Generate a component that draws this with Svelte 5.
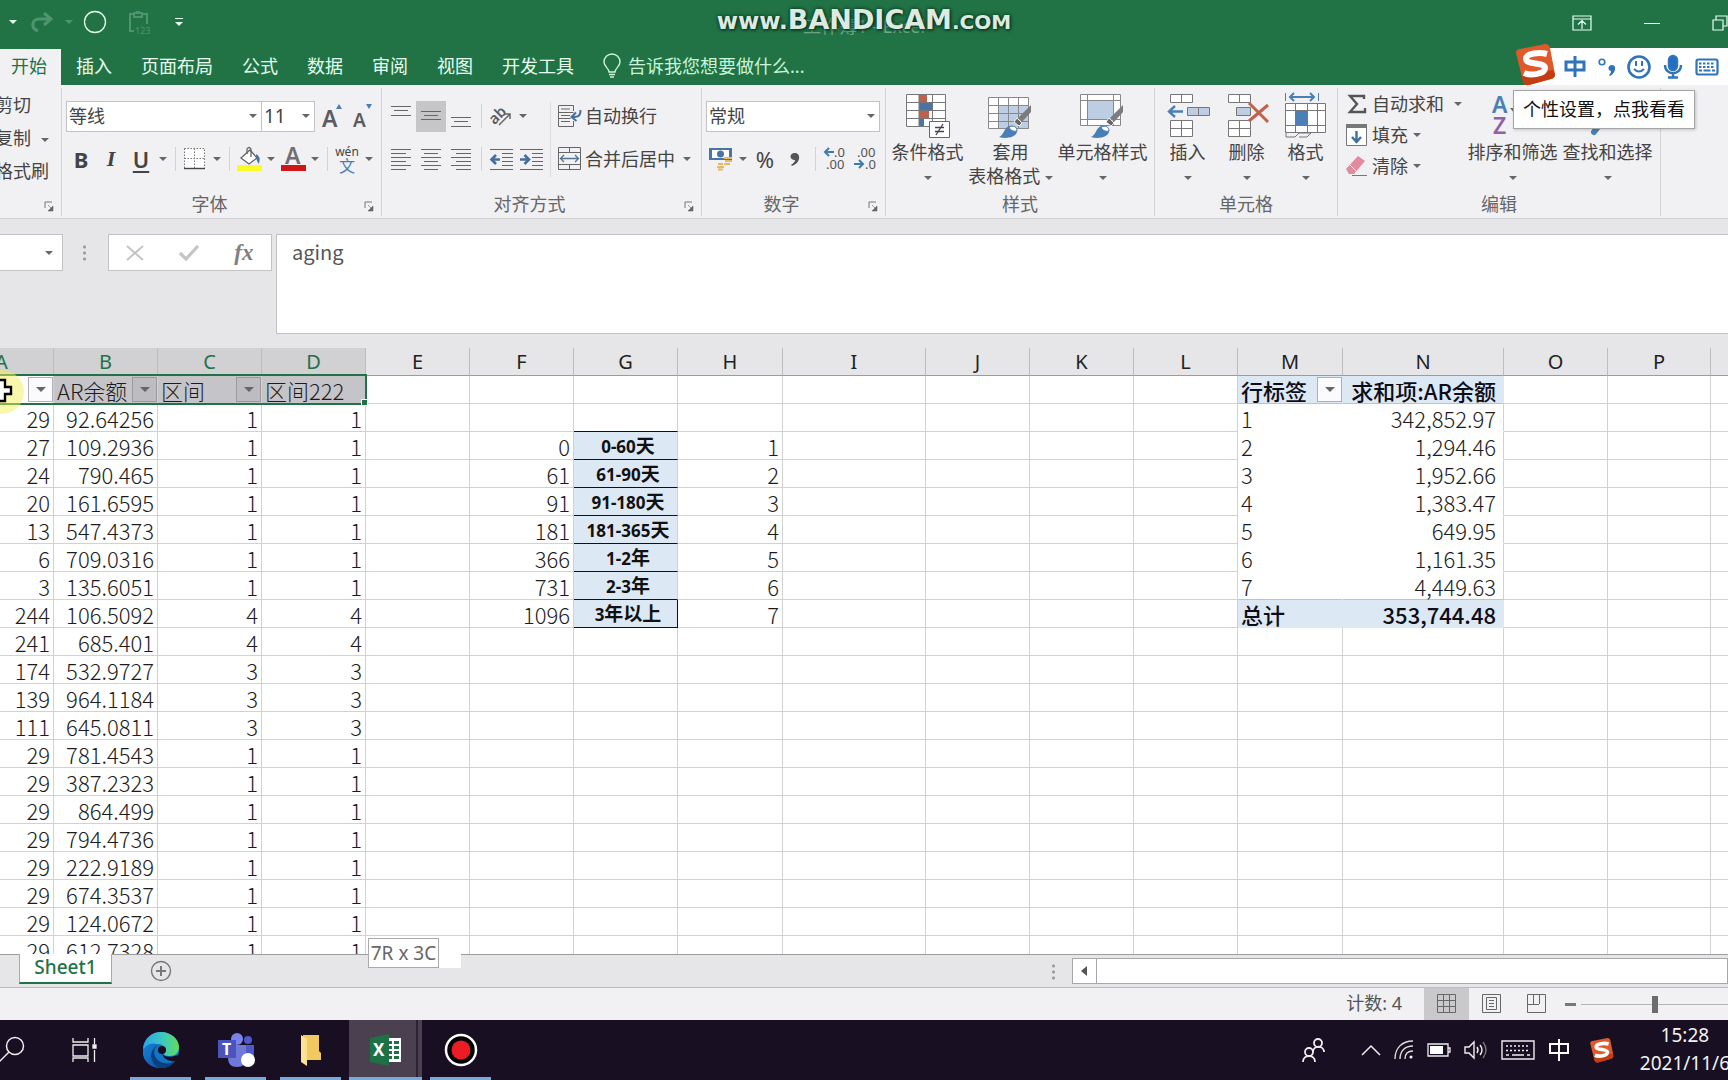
<script>
  const tabs = ["开始", "插入", "页面布局", "公式", "数据", "审阅", "视图", "开发工具"];

  const columns = [
    { name: "A", width: 104 },
    { name: "B", width: 104 },
    { name: "C", width: 104 },
    { name: "D", width: 104 },
    { name: "E", width: 104 },
    { name: "F", width: 104 },
    { name: "G", width: 104 },
    { name: "H", width: 105 },
    { name: "I", width: 143 },
    { name: "J", width: 104 },
    { name: "K", width: 104 },
    { name: "L", width: 104 },
    { name: "M", width: 105 },
    { name: "N", width: 161 },
    { name: "O", width: 104 },
    { name: "P", width: 103 },
    { name: "Q", width: 0 }
  ];

  const aging = [
    ["29", "92.64256", "1", "1"],
    ["27", "109.2936", "1", "1"],
    ["24", "790.465", "1", "1"],
    ["20", "161.6595", "1", "1"],
    ["13", "547.4373", "1", "1"],
    ["6", "709.0316", "1", "1"],
    ["3", "135.6051", "1", "1"],
    ["244", "106.5092", "4", "4"],
    ["241", "685.401", "4", "4"],
    ["174", "532.9727", "3", "3"],
    ["139", "964.1184", "3", "3"],
    ["111", "645.0811", "3", "3"],
    ["29", "781.4543", "1", "1"],
    ["29", "387.2323", "1", "1"],
    ["29", "864.499", "1", "1"],
    ["29", "794.4736", "1", "1"],
    ["29", "222.9189", "1", "1"],
    ["29", "674.3537", "1", "1"],
    ["29", "124.0672", "1", "1"],
    ["29", "612.7328", "1", "1"]
  ];

  const buckets = [
    ["0", "0-60", "天", "1"],
    ["61", "61-90", "天", "2"],
    ["91", "91-180", "天", "3"],
    ["181", "181-365", "天", "4"],
    ["366", "1-2", "年", "5"],
    ["731", "2-3", "年", "6"],
    ["1096", "3", "年以上", "7"]
  ];

  const pivot = ["342,852.97", "1,294.46", "1,952.66", "1,383.47", "649.95", "1,161.35", "4,449.63"];

  // row numbers as in the sheet, row 1 is the header row
  function buildRow(n) {
    const row = {};
    const data = aging[n - 2];
    if (data) {
      ["A", "B", "C", "D"].forEach((c, i) => (row[c] = { text: data[i], cls: "num" }));
    } else {
      row.A = { text: "", cls: "head", filter: true };
      row.B = { text: "AR余额", cls: "head picked", filter: true };
      row.C = { text: "区间", cls: "head picked", filter: true };
      row.D = { text: "区间222", cls: "head picked" };
    }
    const b = buckets[n - 3];
    if (b) {
      row.F = { text: b[0], cls: "num" };
      row.G = { text: b[1], cjk: b[2], cls: n === 9 ? "bucket last" : "bucket" };
      row.H = { text: b[3], cls: "num wide" };
    }
    if (n === 2) row.G = { text: "", cls: "above" };
    if (n === 1) {
      row.M = { text: "行标签", cls: "pivot-head", filter: true };
      row.N = { text: "求和项:AR余额", cls: "pivot-head right" };
    } else if (n <= 8) {
      row.M = { text: String(n - 1), cls: "pivot first" };
      row.N = { text: pivot[n - 2], cls: "pivot right" };
      if (n === 8) {
        row.M.cls += " end";
        row.N.cls += " end";
      }
    } else if (n === 9) {
      row.M = { text: "总计", cls: "pivot-head total" };
      row.N = { text: "353,744.48", cls: "pivot-head total right" };
    }
    return row;
  }

  const rows = Array.from({ length: 21 }, (_, i) => buildRow(i + 1));

  let formula = $state("aging");
  let zoom = $state(50);
  let activeTab = $state("开始");
</script>

{#snippet caret()}<span class="caret"></span>{/snippet}

{#snippet launcher(label)}
  <button class="launcher" aria-label={label}>
    <svg width="10" height="11" viewBox="0 0 10 11"><path d="M1 7V1h7" fill="none" stroke="#777" /><path d="M4 4l4 4M9 5v5H4z" fill="#666" stroke="#666" stroke-width=".6" /></svg>
  </button>
{/snippet}

{#snippet lines(list)}
  <svg width="20" height="24" viewBox="0 0 20 24" stroke="#666" stroke-width="1">
    {#each list as [x, w, y]}
      <path d="M{x} {y}.5h{w}" />
    {/each}
  </svg>
{/snippet}

{#snippet brush()}
  <path d="M43 12L30 25l4 4 9-10z" fill="#7c7c80" />
  <path d="M29 25l5 5-3 3-5-4z" fill="#666" stroke="#f1f0f3" stroke-width="1" />
  <path d="M11 44c5-2 5-9 10-11 5-1 9 2 8 6-2 6-12 7-18 5z" fill="#4a7fb5" />
  <path d="M21 34c1 3 4 5 8 4 0-4-3-6-8-4z" fill="#fff" stroke="#4a7fb5" />
{/snippet}

{#snippet sogou(size)}
  <svg width={size} height={size} viewBox="0 0 42 42">
    <path d="M2 9Q2 5 6 5L31 0q4 0 5 4l5 26q0 4-4 5L15 41q-5 1-6-4z" fill="#e0592a" />
    <path d="M9 37l-1-5 31-6 2 5q0 3-4 4L15 41q-5 1-6-4z" fill="#c33c12" />
    <path d="M33 10C26 8 12 9 12 15s19 3 19 9-14 8-21 5" fill="none" stroke="#fff" stroke-width="6" />
  </svg>
{/snippet}

<div class="window">
  <header class="titlebar">
    <div class="quick">
      {@render caret()}
      <button class="faded" aria-label="恢复">
        <svg width="22" height="22" viewBox="0 0 22 22" fill="none" stroke="#4f9470" stroke-width="3"><path d="M7 20C-1 17 1 8 8 8h11M13 2l7 6-7 6" /></svg>
      </button>
      <span class="caret faded"></span>
      <button class="oval" aria-label="椭圆">
        <svg width="24" height="24" viewBox="0 0 24 24"><circle cx="12" cy="12" r="10.5" fill="none" stroke="#e6fff0" stroke-width="1.3" /></svg>
      </button>
      <button class="paste" aria-label="粘贴值">
        <svg width="22" height="24" viewBox="0 0 22 24" fill="none" stroke="#4f9470" stroke-width="2"><path d="M5 21H1V4h4M14 4h4v10M5 3h8v4H5zM7 2h4" /><text x="6" y="24" font-size="9" fill="#4f9470" stroke="none" font-family="Noto Sans">123</text></svg>
      </button>
      <button aria-label="自定义快速访问工具栏">
        <svg width="8" height="9" viewBox="0 0 8 9"><path d="M0 .5h8" stroke="#e6fff0" /><path d="M0 4h8L4 8z" fill="#e6fff0" /></svg>
      </button>
    </div>
    <div class="doc-title">工作簿1 - Excel</div>
    <div class="controls">
      <button aria-label="功能区显示选项">
        <svg width="20" height="16" viewBox="0 0 20 16" fill="none" stroke="#e6fff0" stroke-width="1.2"><path d="M1 1h18v14H1zM1 4h18M10 14V6M6 9.500l4-4 4 4" /></svg>
      </button>
      <button aria-label="最小化">
        <svg width="16" height="16" viewBox="0 0 16 16"><path d="M0 8.500h16" stroke="#e6fff0" /></svg>
      </button>
      <button aria-label="还原">
        <svg width="16" height="16" viewBox="0 0 16 16" fill="none" stroke="#e6fff0" stroke-width="1.200"><path d="M1 5h10v10H1zM4 5V1h11v10h-4" /></svg>
      </button>
    </div>
    <div class="watermark"><small>www.</small>BANDICAM<small class="com">.COM</small></div>
  </header>

  <nav class="tabs">
    {#each tabs as tab}
      <button class="tab" class:active={activeTab === tab} onclick={() => (activeTab = tab)}>{tab}</button>
    {/each}
    <button class="tell-me">
      <svg width="18" height="24" viewBox="0 0 18 24" fill="none" stroke="#c9f5da" stroke-width="1.400"><path d="M6 18c0-4-5-5-5-10a8 8 0 0116 0c0 5-5 6-5 10zM6 20.500h6M7 23h4" /></svg>
      告诉我您想要做什么...
    </button>
  </nav>

  <section class="ribbon">
    <div class="group clipboard">
      <div class="body">
        <button>剪切</button>
        <button>复制 {@render caret()}</button>
        <button>格式刷</button>
      </div>
      <div class="foot"><span></span>{@render launcher("剪贴板")}</div>
    </div>

    <div class="group font">
      <div class="body rows">
        <div class="row">
          <label class="combo family">
            <select aria-label="字体"><option>等线</option></select>
            {@render caret()}
          </label>
          <label class="combo size">
            <select aria-label="字号"><option>11</option></select>
            {@render caret()}
          </label>
          <button class="tool" aria-label="增大字号">
            <svg width="22" height="26" viewBox="0 0 22 26"><text x="0" y="24" font-size="23" class="glyph">A</text><path d="M14 6l3-5 3 5z" fill="#4a7fb5" /></svg>
          </button>
          <button class="tool" aria-label="减小字号">
            <svg width="20" height="26" viewBox="0 0 20 26"><text x="0" y="24" font-size="19" class="glyph">A</text><path d="M13 1h6l-3 5z" fill="#4a7fb5" /></svg>
          </button>
        </div>
        <div class="row">
          <button class="tool letter"><b>B</b></button>
          <button class="tool letter italic"><i>I</i></button>
          <button class="tool letter"><u>U</u></button>
          <button class="drop" aria-label="下划线样式">{@render caret()}</button>
          <span class="sep"></span>
          <button class="tool" aria-label="边框">
            <svg width="22" height="22" viewBox="0 0 22 22" fill="none" stroke="#777"><path d="M.5.5h20v20H.5z" fill="#fff" stroke="none" /><path d="M.5.5h20v20M.5.5v20M10.500.5v20M.5 10.500h20" stroke-dasharray="1.500 1.500" /><path d="M0 20.500h21" stroke="#444" stroke-width="1.400" /></svg>
          </button>
          <button class="drop" aria-label="边框样式">{@render caret()}</button>
          <span class="sep"></span>
          <button class="tool" aria-label="填充颜色">
            <svg width="25" height="26" viewBox="0 0 25 26"><path d="M4 12l9-8 7 8-8 6z" fill="#fff" stroke="#666" stroke-width="1.300" /><path d="M10 8V3q2-3 4 0v8" fill="none" stroke="#666" stroke-width="1.300" /><path d="M19 8q5 2 3 10-3-3-3-10z" fill="#4a6f9d" /><path d="M0 19h25v6H0z" fill="#fbfb26" /></svg>
          </button>
          <button class="drop" aria-label="填充颜色列表">{@render caret()}</button>
          <button class="tool" aria-label="字体颜色">
            <svg width="25" height="26" viewBox="0 0 25 26"><text x="4" y="18" font-size="23" class="glyph light">A</text><path d="M0 19h25v6H0z" fill="#d01717" /></svg>
          </button>
          <button class="drop" aria-label="字体颜色列表">{@render caret()}</button>
          <span class="sep"></span>
          <button class="tool phonetic"><span>wén</span><span class="wen">文</span></button>
          <button class="drop" aria-label="拼音选项">{@render caret()}</button>
        </div>
      </div>
      <div class="foot"><span>字体</span>{@render launcher("字体设置")}</div>
    </div>

    <div class="group align">
      <div class="body split">
        <div class="rows">
          <div class="row">
            <button class="tool" aria-label="顶端对齐">{@render lines([[0, 20, 2], [3, 14, 6], [0, 20, 11]])}</button>
            <button class="tool on" aria-label="垂直居中">{@render lines([[0, 20, 7], [3, 14, 11], [0, 20, 15]])}</button>
            <button class="tool" aria-label="底端对齐">{@render lines([[0, 20, 13], [3, 14, 17], [0, 20, 22]])}</button>
            <span class="sep"></span>
            <button class="tool" aria-label="方向">
              <svg width="22" height="22" viewBox="0 0 22 22"><text x="-1" y="15" font-size="15" class="glyph" transform="rotate(-45 8 11)">ab</text><path d="M9 20L20 9M15 9h5v5" fill="none" stroke="#666" stroke-width="1.500" /></svg>
            </button>
            <button class="drop" aria-label="方向选项">{@render caret()}</button>
          </div>
          <div class="row">
            <button class="tool" aria-label="左对齐">{@render lines([[0, 20, 2], [0, 15, 6], [0, 20, 10], [0, 15, 14], [0, 20, 18], [0, 15, 22]])}</button>
            <button class="tool" aria-label="居中">{@render lines([[0, 20, 2], [3, 14, 6], [0, 20, 10], [3, 14, 14], [0, 20, 18], [3, 14, 22]])}</button>
            <button class="tool" aria-label="右对齐">{@render lines([[0, 20, 2], [5, 15, 6], [0, 20, 10], [5, 15, 14], [0, 20, 18], [5, 15, 22]])}</button>
            <span class="sep"></span>
            <button class="tool" aria-label="减少缩进量">
              <svg width="23" height="24" viewBox="0 0 23 24" stroke="#666"><path d="M0 2.500h23M12 6.500h11M12 10.500h11M12 14.500h11M12 18.500h11M0 22.500h23" /><path d="M10 12.500H3M6 8l-4.500 4.500L6 17" fill="none" stroke="#456f9f" stroke-width="2.600" /></svg>
            </button>
            <button class="tool" aria-label="增加缩进量">
              <svg width="23" height="24" viewBox="0 0 23 24" stroke="#666"><path d="M0 2.500h23M12 6.500h11M12 10.500h11M12 14.500h11M12 18.500h11M0 22.500h23" /><path d="M0 12.500h7M4.500 8L9 12.500 4.500 17" fill="none" stroke="#456f9f" stroke-width="2.600" /></svg>
            </button>
          </div>
        </div>
        <div class="rows wrap-col">
          <button class="row">
            <svg width="24" height="24" viewBox="0 0 24 24" fill="none" stroke="#666"><path d="M15.500 7V1.500H.5v21h15V17M.5 8.500h15M.5 14.500h12M3 5h9M3 11.500h9M3 17.500h9" /><path d="M22.500 6c0 6-2 7-8 7M18 8.500L13.500 13l5 4" stroke="#456f9f" stroke-width="2" /></svg>
            自动换行
          </button>
          <button class="row">
            <svg width="24" height="24" viewBox="0 0 24 24" fill="none" stroke="#666"><path d="M.5.5h22v22H.5zM.5 5.500h22M.5 17.500h22M11.500.5v5M11.500 17.500v5" /><path d="M3 11.500h17M6 8l-3.500 3.500L6 15M17 8l3.500 3.500L17 15" stroke="#55748f" stroke-width="1.300" /></svg>
            合并后居中
            {@render caret()}
          </button>
        </div>
      </div>
      <div class="foot"><span>对齐方式</span>{@render launcher("对齐设置")}</div>
    </div>

    <div class="group number">
      <div class="body rows">
        <div class="row">
          <label class="combo format">
            <select aria-label="数字格式"><option>常规</option></select>
            {@render caret()}
          </label>
        </div>
        <div class="row">
          <button class="tool" aria-label="会计数字格式">
            <svg width="24" height="22" viewBox="0 0 24 22"><path d="M0 0h23v12H0z" fill="#4a74a3" /><path d="M3 2h17v8H3z" fill="#fff" /><circle cx="11.500" cy="6" r="3.500" fill="#4a74a3" /><path d="M15 10h8M16 13h7M15 16h6M9 16h5M8 19h7M9 21.500h5" stroke="#e8b869" stroke-width="2" /></svg>
          </button>
          <button class="drop" aria-label="会计格式列表">{@render caret()}</button>
          <button class="tool percent">%</button>
          <button class="tool" aria-label="千位分隔样式">
            <svg width="10" height="15" viewBox="0 0 10 15"><path d="M5 1c6 0 6 10-3 13l-1-1c3-2 4-4 4-5C-1 8-1 1 5 1z" fill="#555" /></svg>
          </button>
          <span class="sep"></span>
          <button class="tool decimal" aria-label="增加小数位数">
            <svg width="24" height="26" viewBox="0 0 24 26"><path d="M11 6H3M6 2L2 6l4 4" fill="none" stroke="#3f7ab0" stroke-width="2" /><text x="11" y="11">.0</text><text x="3" y="23">.00</text></svg>
          </button>
          <button class="tool decimal" aria-label="减少小数位数">
            <svg width="24" height="26" viewBox="0 0 24 26"><text x="4" y="11">.00</text><path d="M1 18h8M6 14l4 4-4 4" fill="none" stroke="#3f7ab0" stroke-width="2" /><text x="12" y="23">.0</text></svg>
          </button>
        </div>
      </div>
      <div class="foot"><span>数字</span>{@render launcher("数字格式设置")}</div>
    </div>

    <div class="group styles">
      <div class="body bigs">
        <button class="big cond">
          <span class="pic">
            <svg width="46" height="46" viewBox="0 0 46 46"><path d="M1 1h40v32H1z" fill="#fff" /><path d="M14 1h8v8h-8zM14 18h10v7H14z" fill="#c0604c" /><path d="M14 10h13v7H14zM14 26h5v7h-5z" fill="#4a74a8" /><path d="M1.500 1.500h39v32h-39zM14 1v32M27.500 1v32M1 9.500h40M1 17.500h40M1 25.500h40" fill="none" stroke="#777" /><path d="M24.500 28.500h20v16h-20z" fill="#fff" stroke="#666" /><path d="M30 34.500h9M30 38.500h9M38 31l-7 11" stroke="#444" stroke-width="1.300" /></svg>
          </span>
          <span>条件格式</span>
          <span>{@render caret()}</span>
        </button>
        <button class="big table-style">
          <span class="pic">
            <svg width="46" height="46" viewBox="0 0 46 46"><path d="M.5 4.500h40v31H.5z" fill="#fff" /><path d="M11 13h30v23H11z" fill="#bdcde4" /><path d="M.5 4.500h40v31H.5zM10.500 4v31M20.500 4v31M30.500 4v31M0 12.500h40M0 20.500h40M0 28.500h40" fill="none" stroke="#888" />{@render brush()}</svg>
          </span>
          <span>套用</span>
          <span>表格格式 {@render caret()}</span>
        </button>
        <button class="big cell-style">
          <span class="pic">
            <svg width="46" height="46" viewBox="0 0 46 46"><path d="M.5 1.500h40v31H.5z" fill="#fff" /><path d="M8 8h26v18H8z" fill="#bdcde4" /><path d="M.5 1.500h40v31H.5zM7.500 1v31M33.500 1v31M0 7.500h40M0 26.500h40" fill="none" stroke="#888" />{@render brush()}</svg>
          </span>
          <span>单元格样式</span>
          <span>{@render caret()}</span>
        </button>
      </div>
      <div class="foot"><span>样式</span></div>
    </div>

    <div class="group cells">
      <div class="body bigs">
        <button class="big">
          <span class="pic">
            <svg width="44" height="46" viewBox="0 0 44 46"><path d="M4.500 1.500h22v8h-22zM4.500 27.500h22v16h-22zM15.500 1v8M15.500 27v16M4 35.500h22" fill="#fff" stroke="#777" /><path d="M21.500 14.500h22v8h-22zM32.500 14v8" fill="#bdcde4" stroke="#777" /><path d="M17 18.500H4M9 13l-6 5.500L9 24" fill="none" stroke="#4a80b5" stroke-width="2.400" /></svg>
          </span>
          <span>插入</span>
          <span>{@render caret()}</span>
        </button>
        <button class="big">
          <span class="pic">
            <svg width="44" height="46" viewBox="0 0 44 46"><path d="M3.500 1.500h22v8h-22zM3.500 27.500h22v16h-22zM14.500 1v8M14.500 27v16M3 35.500h22" fill="#fff" stroke="#777" /><path d="M11.500 14.500h14v8h-14z" fill="#bdcde4" stroke="#777" /><path d="M24 10l19 19M43 12L24 28" fill="none" stroke="#c4604a" stroke-width="3" /></svg>
          </span>
          <span>删除</span>
          <span>{@render caret()}</span>
        </button>
        <button class="big">
          <span class="pic">
            <svg width="44" height="46" viewBox="0 0 44 46"><path d="M1.500 0v8M34.500 0v8" stroke="#4a80b5" /><path d="M6 4h24M10 0L6 4l4 4M26 0l4 4-4 4" fill="none" stroke="#4a80b5" stroke-width="2" /><path d="M1.500 10.500h40v29h-40z" fill="#fff" /><path d="M12 18h11v14H12z" fill="#4a80b5" /><path d="M1.500 10.500h40v29h-40zM11.500 10v29M23.500 10v29M33.500 10v29M1 17.500h40M1 32.500h40M2 40v4h9l4-4h12l-4 4h-8M27 40l-4 4" fill="none" stroke="#777" /></svg>
          </span>
          <span>格式</span>
          <span>{@render caret()}</span>
        </button>
      </div>
      <div class="foot"><span>单元格</span></div>
    </div>

    <div class="group edit">
      <div class="body bigs">
        <div class="edit-list">
          <button>
            <svg width="21" height="20" viewBox="0 0 21 20"><path d="M18 5V2H4l7 8-7 8h15v-4" fill="none" stroke="#555" stroke-width="2.400" /></svg>
            自动求和 {@render caret()}
          </button>
          <button class="near">
            <svg width="21" height="22" viewBox="0 0 21 22"><path d="M.5.5h20v21H.5z" fill="#fff" stroke="#777" /><path d="M0 0h21v4H0z" fill="#777" /><path d="M10.500 7v10M6 13l4.500 5 4.500-5" fill="none" stroke="#3f6f9f" stroke-width="2.400" /></svg>
            填充{@render caret()}
          </button>
          <button class="near">
            <svg width="21" height="20" viewBox="0 0 21 20"><path d="M0 13L12 0l7 5L8 18H3z" fill="#e28b9d" /><path d="M4 9l6 6" stroke="#fff" /><path d="M6 19.500h15" stroke="#777" /></svg>
            清除{@render caret()}
          </button>
        </div>
        <button class="big wide">
          <span class="pic">
            <svg width="46" height="46" viewBox="0 0 46 46"><text x="2" y="20" font-size="23" class="az" fill="#4a80b5">A</text><text x="3" y="41" font-size="23" class="az" fill="#9160a8">Z</text><path d="M20 15h10l-5 6z" fill="#666" /></svg>
          </span>
          <span>排序和筛选</span>
          <span>{@render caret()}</span>
        </button>
        <button class="big wide">
          <span class="pic">
            <svg width="46" height="46" viewBox="0 0 46 46"><circle cx="26" cy="16" r="11" fill="#fff" stroke="#777" stroke-width="2" /><path d="M18 27L9 39" stroke="#4a80b5" stroke-width="6" stroke-linecap="round" /></svg>
          </span>
          <span>查找和选择</span>
          <span>{@render caret()}</span>
        </button>
      </div>
      <div class="foot"><span>编辑</span></div>
    </div>
  </section>

  <section class="formula-bar">
    <div class="name-box">
      <input aria-label="名称框" />
      {@render caret()}
    </div>
    <span class="dots"></span>
    <div class="fx-box">
      <button aria-label="取消"><svg width="18" height="16" viewBox="0 0 18 16"><path d="M1 1l16 14M17 1L1 15" stroke="#c4c4c6" stroke-width="2" /></svg></button>
      <button aria-label="输入"><svg width="20" height="16" viewBox="0 0 20 16"><path d="M1 8l6 6L19 1" fill="none" stroke="#c4c4c6" stroke-width="3.200" /></svg></button>
      <button class="fx">fx</button>
    </div>
    <textarea aria-label="编辑栏" bind:value={formula}></textarea>
  </section>

  <main class="sheet">
    <table>
      <colgroup>
        {#each columns as col}
          <col style:width={col.width ? `${col.width}px` : null} />
        {/each}
      </colgroup>
      <thead>
        <tr>
          {#each columns as col, i}
            <th class:selected={i < 4}>{col.name}</th>
          {/each}
        </tr>
      </thead>
      <tbody>
        {#each rows as row}
          <tr>
            {#each columns as col}
              {@const cell = row[col.name]}
              <td class={cell?.cls}>
                {#if cell}
                  <div class="cell">
                    <span>{cell.text}{#if cell.cjk}<span class="cjk">{cell.cjk}</span>{/if}</span>
                    {#if cell.filter}
                      <button class="filter" aria-label="筛选">{@render caret()}</button>
                    {/if}
                  </div>
                {/if}
              </td>
            {/each}
          </tr>
        {/each}
      </tbody>
    </table>
    <div class="selection"></div>
    <div class="pointer">
      <svg width="48" height="48" viewBox="0 0 48 48"><circle cx="24" cy="26" r="22" fill="#f4ef5a" opacity=".5" /><path d="M20 14h7v7h6v7h-6v7h-7v-7h-7v-7h7z" fill="#fff" stroke="#000" stroke-width="2.400" /></svg>
    </div>
  </main>

  <footer class="sheet-bar">
    <button class="sheet-tab">Sheet1</button>
    <button class="add" aria-label="新工作表">
      <svg width="22" height="22" viewBox="0 0 22 22" fill="none" stroke="#777"><circle cx="11" cy="11" r="9.500" stroke-width="1.400" /><path d="M6 11h10M11 6v10" stroke-width="2" /></svg>
    </button>
    <div class="size-tip"><span>7R x 3C</span></div>
    <span class="dots"></span>
    <div class="scroll">
      <button aria-label="向左滚动"><svg width="8" height="10" viewBox="0 0 8 10"><path d="M7 0v10L1 5z" fill="#555" /></svg></button>
      <div class="thumb"></div>
    </div>
  </footer>

  <div class="status">
    <span class="count">计数: 4</span>
    <button class="view on" aria-label="普通">
      <svg width="20" height="20" viewBox="0 0 20 20" fill="none" stroke="#666"><path d="M.5.5h18v18H.5zM6.500 0v19M12.500 0v19M0 6.500h19M0 12.500h19" /></svg>
    </button>
    <button class="view" aria-label="页面布局">
      <svg width="20" height="20" viewBox="0 0 20 20" fill="none" stroke="#666"><path d="M.5.5h18v18H.5zM4.500 3.500h10v12h-10zM7 6.500h5M7 9.500h5M7 12.500h5" /></svg>
    </button>
    <button class="view" aria-label="分页预览">
      <svg width="20" height="20" viewBox="0 0 20 20" fill="none" stroke="#666"><path d="M.5.5h18v18H.5zM6.500 0v10M12.500 0v10M0 10.500h12" /></svg>
    </button>
    <button class="minus" aria-label="缩小"></button>
    <input class="zoom" type="range" aria-label="缩放" min="0" max="100" bind:value={zoom} />
  </div>

  <div class="taskbar">
    <button class="search" aria-label="搜索">
      <svg width="26" height="28" viewBox="0 0 26 28" fill="none" stroke="#eee" stroke-width="1.500"><circle cx="15" cy="10" r="8.500" /><path d="M9 16L-2 27" /></svg>
    </button>
    <button class="task-view" aria-label="任务视图">
      <svg width="26" height="24" viewBox="0 0 26 24" fill="none" stroke="#eee" stroke-width="1.300"><path d="M1 0v4h15V0M1 7h15v11H1zM1 24v-4h15v4M22.500 0v6M22.500 12v12" /><path d="M21 7h3v3h-3z" fill="#eee" /></svg>
    </button>
    <button class="app" aria-label="Microsoft Edge">
      <svg width="38" height="38" viewBox="0 0 38 38">
        <defs>
          <linearGradient id="edge-a" x1="0" x2="1"><stop offset="0" stop-color="#2fa4e8" /><stop offset=".55" stop-color="#3cc8c0" /><stop offset="1" stop-color="#63dc58" /></linearGradient>
          <linearGradient id="edge-b" x1="0" x2="1" y2="1"><stop offset="0" stop-color="#1683dc" /><stop offset="1" stop-color="#0d4f9e" /></linearGradient>
        </defs>
        <circle cx="19" cy="19" r="18" fill="#1373c4" />
        <path d="M1 18C2 7 10 1 19 1c10 0 18 7 18 15 0 6-4 9-9 9-4 0-7-1-6-3 3-5-1-9-6-9-8 0-13 4-15 5z" fill="url(#edge-a)" />
        <path d="M1 20c2-6 8-9 14-7-6 2-8 8-6 14 2 5 6 9 12 10C9 38 0 30 1 20z" fill="url(#edge-b)" />
        <path d="M16 14c-4 3-5 8-2 13 4 6 13 7 19 3-4 6-9 7-13 7C8 36 5 19 16 14z" fill="#0b3f7e" />
        <path d="M17 17c-2 3-1 8 3 9 5 2 12 1 18-3l-3 7-4 1c-8 1-15-2-15-9z" fill="#190f22" opacity=".0" />
        <circle cx="20" cy="19" r="4" fill="#160f22" />
        <path d="M20 22c1 4 8 5 16 2l3 0-5 6c-4 1-13-1-14-8z" fill="#190f22" />
      </svg>
    </button>
    <button class="app" aria-label="Microsoft Teams">
      <svg width="38" height="38" viewBox="0 0 38 38"><circle cx="20" cy="8" r="6" fill="#7b83eb" /><circle cx="31" cy="9" r="4" fill="#5059c9" /><path d="M26 14h11v13q0 7-7 7z" fill="#5059c9" /><path d="M12 14h17v13q0 9-9 9t-9-9z" fill="#7078d8" /><path d="M1 9h18v18H1z" fill="#4b53bc" /><text x="5" y="24" font-size="16" font-weight="700" fill="#fff" font-family="Noto Sans">T</text><circle cx="31" cy="29" r="7" fill="#fff" /></svg>
    </button>
    <button class="app" aria-label="文件资源管理器">
      <svg width="24" height="34" viewBox="0 0 24 34"><path d="M4 2h16v16l2 2v7H4z" fill="#f2c860" /><path d="M2 2l6 4v27l-6-4z" fill="#ffe291" /></svg>
    </button>
    <button class="app current" aria-label="Excel">
      <svg width="34" height="32" viewBox="0 0 34 32"><path d="M16 4h16v24H16z" fill="#fff" /><path d="M19 7h4v3h-4zM25 7h5v3h-5zM19 12h4v3h-4zM25 12h5v3h-5zM19 17h4v3h-4zM25 17h5v3h-5zM19 22h4v3h-4zM25 22h5v3h-5z" fill="#1e7145" /><path d="M1 4l19-4v32L1 28z" fill="#1e7145" /><text x="4" y="22" font-size="17" font-weight="700" fill="#fff" font-family="Noto Sans">X</text></svg>
    </button>
    <button class="app" aria-label="Bandicam">
      <svg width="34" height="34" viewBox="0 0 34 34"><circle cx="17" cy="17" r="15" fill="#000" stroke="#fff" stroke-width="2.500" /><circle cx="17" cy="17" r="9.500" fill="#ec1c24" /></svg>
    </button>
    <div class="tray">
      <svg class="people" width="24" height="24" viewBox="0 0 24 24" fill="none" stroke="#eee" stroke-width="1.800"><circle cx="16" cy="5" r="4" /><circle cx="7" cy="14" r="4" /><path d="M11 14c0-7 11-7 11 0M1 24c0-8 12-8 12 0" /></svg>
      <svg width="20" height="12" viewBox="0 0 20 12"><path d="M1 11l9-9 9 9" fill="none" stroke="#eee" stroke-width="1.500" /></svg>
      <svg width="20" height="20" viewBox="0 0 20 20" fill="none" stroke="#ddd" stroke-width="1.400"><path d="M1 19C1 8 8 1 19 1M6 19C6 11 11 6 19 6M11 19c0-5 3-8 8-8" /><circle cx="17" cy="17" r="1.500" fill="#fff" stroke="none" /></svg>
      <svg width="24" height="14" viewBox="0 0 24 14"><path d="M1 1h20v12H1zM21 5h2v4h-2" fill="none" stroke="#eee" stroke-width="1.300" /><path d="M3 3h13v8H3z" fill="#fff" /></svg>
      <svg width="24" height="20" viewBox="0 0 24 20" fill="none" stroke="#eee" stroke-width="1.400"><path d="M1 7h4l5-5v16l-5-5H1zM13 7q2 3 0 6M16 5q4 5 0 10" /><path d="M19 2q6 8 0 16" stroke="#777" /></svg>
      <svg width="34" height="20" viewBox="0 0 34 20" fill="none" stroke="#eee" stroke-width="1.400"><path d="M1 1h32v18H1z" /><path d="M5 6h24M5 10.500h24" stroke-dasharray="2 2" /><path d="M5 15h3M11 15h12M26 15h3" /></svg>
      <svg width="22" height="24" viewBox="0 0 22 24" fill="none" stroke="#fff" stroke-width="2"><path d="M2 6h18v9H2zM11 1v22" /></svg>
      {@render sogou(25)}
    </div>
    <div class="clock"><span>15:28</span><span>2021/11/6</span></div>
  </div>

  <div class="ime">
    {@render sogou(42)}
    <button aria-label="中文"><svg width="22" height="22" viewBox="0 0 22 22" fill="none" stroke="#2f74bb" stroke-width="3"><path d="M2 6h18v8H2zM11 0v21" /></svg></button>
    <button aria-label="标点"><svg width="18" height="20" viewBox="0 0 18 20"><circle cx="4" cy="5" r="2.800" fill="none" stroke="#2f74bb" stroke-width="1.600" /><path d="M14 8c5 0 4 8-2 11l-1-1c1-1 2-2 2-4-4-1-3-6 1-6z" fill="#2f74bb" /></svg></button>
    <button aria-label="表情"><svg width="24" height="24" viewBox="0 0 24 24" fill="none" stroke="#2f74bb" stroke-width="2.600"><circle cx="12" cy="12" r="10.500" /><path d="M9 6v5M15 6v5M7 14q5 5 10 0" stroke-width="2" /></svg></button>
    <button aria-label="语音"><svg width="20" height="24" viewBox="0 0 20 24" fill="none" stroke="#2f74bb" stroke-width="2.400"><rect x="6" y="1" width="8" height="14" rx="4" fill="#1f6fc9" /><path d="M2 10c0 11 16 11 16 0M10 18v5M5 22.500h10" /></svg></button>
    <button aria-label="软键盘"><svg width="24" height="18" viewBox="0 0 24 18" fill="none" stroke="#2f74bb" stroke-width="2.200"><rect x="1.500" y="1.500" width="21" height="15" rx="2" /><path d="M4 5.500h16M4 9h16" stroke-dasharray="2.500 1.500" /><path d="M4 12.500h3M8.500 12.500h7M17 12.500h3" /></svg></button>
  </div>
  <div class="ime-tip">个性设置，点我看看</div>
</div>

<style>
  :global(body) {
    margin: 0;
    font-family: "Noto Sans", "Noto Sans CJK SC", sans-serif;
    font-size: 18px;
    color: #444;
  }
  button, input, select, textarea {
    font: inherit;
    color: inherit;
    background: none;
    border: none;
    padding: 0;
    margin: 0;
    outline: none;
  }
  button {
    white-space: nowrap;
  }
  svg {
    display: block;
    flex: none;
    overflow: visible;
  }
  .window {
    position: relative;
    display: flex;
    flex-direction: column;
    height: 100vh;
    overflow: hidden;
    background: #e6e6e8;
  }
  .caret {
    display: inline-block;
    flex: none;
    width: 0;
    height: 0;
    border: 4px solid transparent;
    border-top-color: #666;
    border-bottom: none;
    vertical-align: middle;
  }

  .titlebar {
    position: relative;
    display: flex;
    justify-content: space-between;
    height: 49px;
    flex: none;
    background: #217346;
  }
  .quick {
    display: flex;
    align-items: center;
    gap: 14px;
    height: 44px;
    padding-left: 9px;
  }
  .quick .caret {
    border-top-color: #e6fff0;
  }
  .quick .caret.faded {
    border-top-color: #4f9470;
    margin-left: -2px;
  }
  .oval {
    margin-left: -4px;
  }
  .paste {
    margin: 0 10px 0 8px;
  }
  .doc-title {
    position: absolute;
    left: 50%;
    top: 12px;
    transform: translateX(-50%);
    line-height: 28px;
    color: #6fa98a;
  }
  .controls {
    display: flex;
    align-items: center;
    gap: 52px;
    height: 46px;
  }
  .watermark {
    position: absolute;
    left: 50%;
    top: 5px;
    transform: translateX(-50%);
    font-family: "DejaVu Sans", sans-serif;
    font-size: 27px;
    font-weight: bold;
    line-height: 30px;
    color: #dcebe2;
    white-space: nowrap;
    text-shadow: 0 0 4px #0a2f1b, 1px 1px 3px #0a2f1b;
  }
  .watermark small {
    font-size: 23px;
  }
  .watermark .com {
    font-size: 20px;
  }

  .tabs {
    display: flex;
    gap: 1px;
    height: 36px;
    flex: none;
    margin-left: -3px;
    background: #217346;
    color: #e6fff0;
  }
  .tab {
    padding: 0 14px 2px;
    line-height: 32px;
  }
  .tab.active {
    background: #f1f0f3;
    color: #217346;
  }
  .tell-me {
    display: flex;
    align-items: center;
    gap: 7px;
    padding: 0 0 2px 14px;
    line-height: 32px;
    color: #c9f5da;
  }

  .ribbon {
    display: flex;
    flex: none;
    padding: 3px 0 2px;
    background: #f1f0f3;
    border-bottom: 1px solid #cfcfd1;
    line-height: 24px;
  }
  .group {
    display: flex;
    flex-direction: column;
    box-sizing: border-box;
    flex: none;
    height: 128px;
    border-right: 1px solid #d4d3d6;
  }
  .body {
    flex: 1;
  }
  .foot {
    display: flex;
    height: 26px;
    line-height: 28px;
    color: #666;
  }
  .foot span {
    flex: 1;
    text-align: center;
  }
  .launcher {
    display: flex;
    align-items: center;
    justify-content: center;
    width: 24px;
    padding-top: 6px;
  }
  .clipboard {
    width: 62px;
  }
  .clipboard .body {
    display: flex;
    flex-direction: column;
    align-items: flex-start;
    padding-top: 1px;
    margin-left: -5px;
  }
  .clipboard .body button {
    line-height: 33px;
  }
  .clipboard .caret {
    margin-left: 5px;
  }
  .font, .align {
    width: 320px;
  }
  .number {
    width: 184px;
  }
  .styles {
    width: 269px;
  }
  .cells {
    width: 183px;
  }
  .edit {
    width: 323px;
  }
  .rows {
    display: flex;
    flex-direction: column;
    gap: 13px;
    padding-top: 13px;
  }
  .row {
    display: flex;
    align-items: center;
    height: 30px;
    padding-left: 4px;
  }
  .combo {
    display: flex;
    align-items: center;
    box-sizing: border-box;
    height: 31px;
    padding-right: 4px;
    background: #fff;
    border: 1px solid #c3c2c5;
  }
  .combo select {
    appearance: none;
    flex: 1;
    min-width: 0;
    padding-left: 2px;
  }
  .family {
    width: 196px;
  }
  .size {
    width: 54px;
    margin: 0 3px 0 -1px;
    font-size: 19px;
  }
  .format {
    width: 174px;
  }
  .tool {
    display: flex;
    align-items: center;
    justify-content: center;
    width: 30px;
    height: 31px;
    flex: none;
  }
  .tool.on {
    background: #c6c5c8;
  }
  .drop {
    display: flex;
    align-items: center;
    justify-content: center;
    width: 14px;
    height: 30px;
    flex: none;
  }
  .sep {
    width: 10px;
    height: 24px;
    flex: none;
    background: linear-gradient(#d4d3d6, #d4d3d6) center / 1px 100% no-repeat;
  }
  .letter {
    font-size: 22px;
  }
  .italic {
    font-family: "Liberation Serif", serif;
    font-weight: bold;
  }
  .letter u {
    font-weight: 600;
    text-underline-offset: 3px;
    text-decoration-thickness: 2px;
  }
  .glyph {
    font-family: "Noto Sans", sans-serif;
    font-weight: 600;
    fill: #5c5c60;
  }
  .glyph.light {
    fill: #707074;
  }
  .az {
    font-family: "Noto Sans", sans-serif;
    font-weight: 600;
  }
  .phonetic {
    flex-direction: column;
    font-size: 12px;
    line-height: 13px;
  }
  .wen {
    font-size: 16px;
    line-height: 16px;
    color: #4a7fb5;
  }
  .percent {
    font-size: 22px;
  }
  .decimal text {
    font-size: 13px;
    fill: #555;
  }
  .split {
    display: flex;
  }
  .wrap-col {
    background: linear-gradient(#dddce0, #dddce0) 4px 14px / 1px 75px no-repeat;
  }
  .wrap-col .row {
    gap: 3px;
    padding-left: 12px;
  }
  .wrap-col .caret {
    margin-left: 5px;
  }
  .bigs {
    display: flex;
    padding-left: 3px;
  }
  .big {
    display: flex;
    flex-direction: column;
    align-items: center;
    width: 59px;
    height: 100px;
    padding-top: 5px;
    box-sizing: border-box;
  }
  .big > span {
    height: 24px;
  }
  .big > .pic {
    height: 47px;
  }
  .cond {
    width: 77px;
  }
  .table-style {
    width: 89px;
  }
  .cell-style, .wide {
    width: 95px;
  }
  .edit-list {
    display: flex;
    flex-direction: column;
    width: 119px;
    padding-left: 5px;
  }
  .edit-list button {
    display: flex;
    align-items: center;
    gap: 5px;
    height: 31px;
  }
  .edit-list .caret {
    margin-left: 5px;
  }
  .edit-list .near .caret {
    margin-left: 0;
  }

  .formula-bar {
    display: flex;
    align-items: flex-start;
    flex: none;
    padding: 15px 0 14px;
  }
  .name-box {
    display: flex;
    align-items: center;
    box-sizing: border-box;
    width: 63px;
    height: 37px;
    padding-right: 9px;
    background: #fff;
    border: 1px solid #c3c2c5;
    border-left: none;
  }
  .name-box input {
    flex: 1;
    min-width: 0;
  }
  .dots {
    width: 3px;
    height: 17px;
    background: radial-gradient(circle at 50% 50%, #999 1px, transparent 2px) 0 0 / 3px 6px;
  }
  .formula-bar .dots {
    margin: 10px 22px 0 20px;
  }
  .fx-box {
    display: flex;
    justify-content: space-around;
    box-sizing: border-box;
    width: 164px;
    height: 37px;
    background: #fff;
    border: 1px solid #c3c2c5;
  }
  .fx {
    font-family: "Liberation Serif", serif;
    font-size: 23px;
    font-style: italic;
    font-weight: bold;
    color: #808084;
  }
  textarea {
    flex: 1;
    box-sizing: border-box;
    height: 100px;
    margin-left: 4px;
    padding: 3px 15px;
    background: #fff;
    border: 1px solid #c3c2c5;
    border-right: none;
    resize: none;
    font-family: "Noto Sans CJK SC", sans-serif;
    font-size: 20px;
    line-height: 28px;
    color: #555;
  }

  .sheet {
    position: relative;
    flex: 1;
    min-height: 0;
    overflow: hidden;
    background: #fff;
    border-bottom: 1px solid #9c9c9e;
    color: #1c1c1e;
  }
  table {
    table-layout: fixed;
    border-collapse: separate;
    border-spacing: 0;
    width: calc(100% + 130px);
    margin-left: -50px;
  }
  th {
    box-sizing: border-box;
    height: 28px;
    padding: 0;
    background: #e6e6e8;
    border-right: 1px solid #bdbdc0;
    border-bottom: 1px solid #9c9c9e;
    font-size: 20px;
    font-weight: 400;
    line-height: 27px;
    color: #222;
  }
  th.selected {
    background: #d1d0d3;
    color: #217346;
  }
  td {
    box-sizing: border-box;
    height: 28px;
    padding: 0 3px;
    border-right: 1px solid #d2d2d4;
    border-bottom: 1px solid #d2d2d4;
    font-family: "Noto Sans CJK SC", sans-serif;
    font-size: 22px;
    font-weight: 300;
  }
  .cell {
    display: flex;
    height: 27px;
    line-height: 28px;
    white-space: nowrap;
  }
  .num .cell, .right .cell {
    justify-content: flex-end;
  }
  .head .cell, .pivot-head .cell {
    justify-content: space-between;
  }
  td.head, td.pivot-head {
    padding-right: 0;
  }
  td.picked {
    background: #c5c4c8;
  }
  .filter {
    display: flex;
    align-items: center;
    justify-content: center;
    flex: none;
    box-sizing: border-box;
    width: 25px;
    height: 25px;
    margin: 1px 0 0 auto;
    background: #fbfbfd;
    border: 1px solid #aeb0b6;
  }
  .filter .caret {
    border-width: 5px;
    border-bottom: none;
  }
  .picked .filter {
    background: #bdbcc1;
    border-color: #9a9a9f;
  }
  td.above {
    border-bottom-color: #111;
  }
  td.bucket {
    padding: 0 0 0 5px;
    background: #dde8f5;
    border-bottom-color: #111;
    font-family: "Noto Sans", sans-serif;
    font-size: 17px;
    font-weight: 700;
    color: #111;
  }
  td.last {
    border-right-color: #111;
  }
  .bucket .cell {
    justify-content: center;
    line-height: 25px;
  }
  .cjk {
    font-family: "Noto Sans CJK SC", sans-serif;
    font-size: 19px;
  }
  td.pivot {
    border-bottom-color: #fff;
  }
  td.first {
    border-right-color: #fff;
  }
  td.end {
    border-bottom-color: #adc6e4;
  }
  td.pivot-head {
    background: #dde8f5;
    border-right-color: #dde8f5;
    border-bottom-color: #adc6e4;
    font-weight: 500;
    color: #0d0d18;
  }
  td.total {
    border-bottom-color: #dde8f5;
  }
  td.right {
    padding-right: 7px;
  }
  td.pivot-head.right .cell {
    justify-content: flex-end;
  }
  .selection {
    position: absolute;
    left: -2px;
    top: 26px;
    width: 365px;
    height: 27px;
    border: 2px solid #217346;
    box-sizing: content-box;
  }
  .selection::after {
    content: "";
    position: absolute;
    right: -3px;
    bottom: -3px;
    width: 5px;
    height: 5px;
    background: #217346;
    border: 1px solid #fff;
  }
  .pointer {
    position: absolute;
    left: -22px;
    top: 18px;
  }

  .sheet-bar {
    position: relative;
    display: flex;
    flex: none;
    align-items: center;
    height: 32px;
    padding-left: 19px;
    border-bottom: 1px solid #bcbcbf;
  }
  .sheet-tab {
    align-self: flex-start;
    box-sizing: border-box;
    width: 93px;
    height: 30px;
    margin-top: -1px;
    padding-bottom: 3px;
    background: #fff;
    border: 1px solid #aaa;
    border-top: none;
    border-bottom: 2px solid #217346;
    font-size: 19px;
    font-weight: 500;
    line-height: 24px;
    color: #217346;
    position: relative;
  }
  .add {
    margin-left: 38px;
  }
  .size-tip {
    position: absolute;
    left: 368px;
    top: -17px;
    width: 93px;
    background: #fff;
    line-height: 28px;
    color: #666;
  }
  .size-tip span {
    display: inline-block;
    box-sizing: border-box;
    width: 71px;
    height: 30px;
    border: 1px solid #aaa;
    font-size: 19px;
    text-align: center;
    white-space: nowrap;
  }
  .sheet-bar .dots {
    margin-left: auto;
    margin-right: 17px;
  }
  .scroll {
    display: flex;
    box-sizing: border-box;
    width: calc(38% + 7px);
    height: 26px;
    background: #fff;
    border: 1px solid #a8a8ab;
  }
  .scroll button {
    display: flex;
    align-items: center;
    justify-content: center;
    width: 24px;
    border-right: 1px solid #a8a8ab;
  }
  .thumb {
    flex: 1;
  }

  .status {
    display: flex;
    align-items: center;
    justify-content: flex-end;
    flex: none;
    height: 32px;
    background: #f1f0f3;
    color: #555;
  }
  .count {
    margin-right: 22px;
    line-height: 24px;
    padding-bottom: 2px;
  }
  .view {
    display: flex;
    align-items: center;
    justify-content: center;
    width: 45px;
    height: 32px;
  }
  .view.on {
    background: #c9c8cb;
  }
  .minus {
    width: 11px;
    height: 3px;
    margin: 0 5px 0 6px;
    background: #777;
  }
  .zoom {
    appearance: none;
    width: 147px;
    height: 17px;
    background: linear-gradient(#b5b5b8, #b5b5b8) center / 100% 1px no-repeat;
  }
  .zoom::-webkit-slider-thumb {
    appearance: none;
    width: 6px;
    height: 17px;
    background: #6c6c70;
  }

  .taskbar {
    display: flex;
    flex: none;
    height: 60px;
    background: #190f22;
    color: #f2f2f4;
  }
  .taskbar button {
    display: flex;
    align-items: center;
  }
  .search {
    width: 47px;
  }
  .task-view {
    justify-content: center;
    width: 76px;
  }
  .app {
    justify-content: center;
    width: 75px;
    background: linear-gradient(#76a9dc, #76a9dc) center bottom / 61px 3px no-repeat;
  }
  .app.current {
    background:
      linear-gradient(#76a9dc, #76a9dc) center bottom / 73px 3px no-repeat,
      linear-gradient(90deg, #4a4050 67px, #2c2235 67px, #2c2235 69px, #4a4050 69px) center / 73px 100% no-repeat;
  }
  .tray {
    display: flex;
    align-items: center;
    gap: 13px;
    margin-left: auto;
  }
  .people {
    margin-right: 22px;
  }
  .tray svg:last-child {
    margin-left: 6px;
  }
  .clock {
    display: flex;
    flex-direction: column;
    align-items: center;
    margin: 1px -2px 0 26px;
    font-size: 19px;
    line-height: 28px;
  }

  .ime {
    position: absolute;
    right: 0;
    top: 48px;
    display: flex;
    align-items: center;
    justify-content: space-between;
    box-sizing: border-box;
    width: 198px;
    height: 37px;
    padding-right: 9px;
    background: #fff;
  }
  .ime > :global(svg) {
    margin: -4px -4px 0 -16px;
  }
  .ime-tip {
    position: absolute;
    right: 33px;
    top: 90px;
    box-sizing: border-box;
    height: 39px;
    padding: 0 9px;
    background: #fff;
    border: 1px solid #a5a5a8;
    box-shadow: 1px 1px 3px #0003;
    font-family: "Noto Sans CJK SC", sans-serif;
    line-height: 34px;
    color: #111;
  }
</style>
